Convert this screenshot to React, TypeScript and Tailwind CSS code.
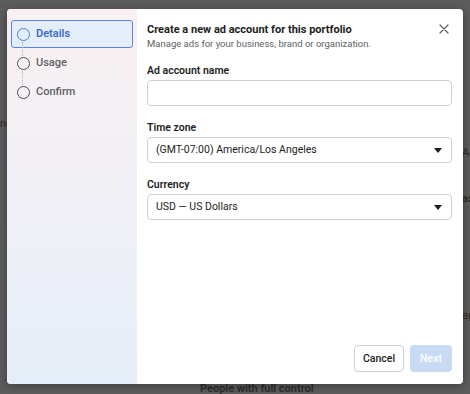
import * as React from 'react'

const STEPS = [
  { id: 'details', label: 'Details', active: true },
  { id: 'usage', label: 'Usage', active: false },
  { id: 'confirm', label: 'Confirm', active: false },
]

function Caret() {
  return (
    <svg width="8" height="5" viewBox="0 0 8 5" aria-hidden>
      <path d="M0 0h8L4 5z" fill="#1c1e21" />
    </svg>
  )
}

function Field({ label, children }: { label: string; children: React.ReactNode }) {
  return (
    <div className="flex flex-col gap-[2px]">
      <label className="text-[10.5px] font-semibold leading-[14px] text-[#1c1e21]">{label}</label>
      {children}
    </div>
  )
}

function SelectBox({ value }: { value: string }) {
  return (
    <div className="flex h-[26px] items-center justify-between rounded-[4px] border border-[#ccd0d5] bg-white pl-[8px] pr-[9px]">
      <span className="text-[10.5px] text-[#1c1e21]">{value}</span>
      <Caret />
    </div>
  )
}

export default function App() {
  return (
    <div
      className="relative h-[394px] w-[470px] overflow-hidden bg-[#5c5c5d]"
      style={{ fontFamily: 'Roboto, "Liberation Sans", Arial, sans-serif' }}
    >
      {/* dimmed page behind the dialog */}
      <span className="absolute left-[462px] top-[145px] text-[11px] text-[#2a2a2a]">Ac</span>
      <span className="absolute left-[462px] top-[191px] text-[11px] font-semibold text-[#2a2a2a]">as</span>
      <span className="absolute left-[462px] top-[308px] text-[11px] text-[#2a2a2a]">ag</span>
      <span className="absolute left-[0px] top-[116px] text-[11px] text-[#2a2a2a]">ne</span>
      <span className="absolute left-[200px] top-[381px] text-[11px] font-semibold text-[#2a2a2a]">People with full control</span>

      {/* dialog */}
      <div className="absolute left-[7px] top-[9px] flex h-[375px] w-[456px] overflow-hidden rounded-[4px] bg-white shadow-[0_2px_8px_rgba(0,0,0,0.35)]">
        <aside className="flex w-[130px] shrink-0 flex-col bg-gradient-to-b from-[#f9f1f3] via-[#f1f0f6] to-[#e5eef9] px-[4px] pt-[11px]">
          {STEPS.map((s, i) => (
            <div key={s.id} className="flex flex-col">
              <div
                className={
                  s.active
                    ? 'flex h-[28px] items-center gap-[6px] rounded-[3px] border border-[#5b84e0] bg-[#e4edfa] pl-[5px]'
                    : 'flex h-[28px] items-center gap-[6px] border border-transparent pl-[5px]'
                }
              >
                <span
                  className={
                    s.active
                      ? 'h-[13px] w-[13px] rounded-full border-[1.5px] border-[#4f7de0]'
                      : 'h-[13px] w-[13px] rounded-full border-[1.5px] border-[#4b4f56]'
                  }
                />
                <span
                  className={
                    s.active
                      ? 'text-[11px] font-semibold text-[#3b6bd0]'
                      : 'text-[11px] font-medium text-[#5d6167]'
                  }
                >
                  {s.label}
                </span>
              </div>
              {i < STEPS.length - 1 && (
                <div className="relative h-[1px]">
                  {/* dotted connector between step circles */}
                  <span className="absolute left-[11px] top-[-6px] h-[14px] border-l-[1.5px] border-dotted border-[#b0b3b8]" />
                </div>
              )}
            </div>
          ))}
        </aside>

        <main className="flex flex-1 flex-col pl-[10px] pr-[11px] pt-[14px] pb-[12px]">
          <div className="flex items-start justify-between">
            <div className="flex flex-col">
              <h1 className="text-[11px] font-bold leading-[14px] text-[#1c1e21]">
                Create a new ad account for this portfolio
              </h1>
              <p className="text-[9.5px] leading-[13px] text-[#5d6167]">
                Manage ads for your business, brand or organization.
              </p>
            </div>
            <svg width="10" height="10" viewBox="0 0 10 10" className="mr-[3px] mt-[1px]" aria-hidden>
              <path d="M1 1l8 8M9 1L1 9" stroke="#5d6167" strokeWidth="1.2" strokeLinecap="round" />
            </svg>
          </div>

          <div className="mt-[14px] flex flex-col gap-[15px]">
            <Field label="Ad account name">
              <div className="h-[26px] rounded-[4px] border border-[#ccd0d5] bg-white" />
            </Field>
            <Field label="Time zone">
              <SelectBox value="(GMT-07:00) America/Los Angeles" />
            </Field>
            <Field label="Currency">
              <SelectBox value="USD — US Dollars" />
            </Field>
          </div>

          <div className="mt-auto flex justify-end gap-[6px]">
            <button className="h-[27px] w-[50px] rounded-[4px] border border-[#ccd0d5] bg-white text-[10.5px] font-medium text-[#1c1e21]">
              Cancel
            </button>
            <button className="h-[27px] w-[42px] rounded-[4px] bg-[#c8daf4] text-[10.5px] font-medium text-white">
              Next
            </button>
          </div>
        </main>
      </div>
    </div>
  )
}
